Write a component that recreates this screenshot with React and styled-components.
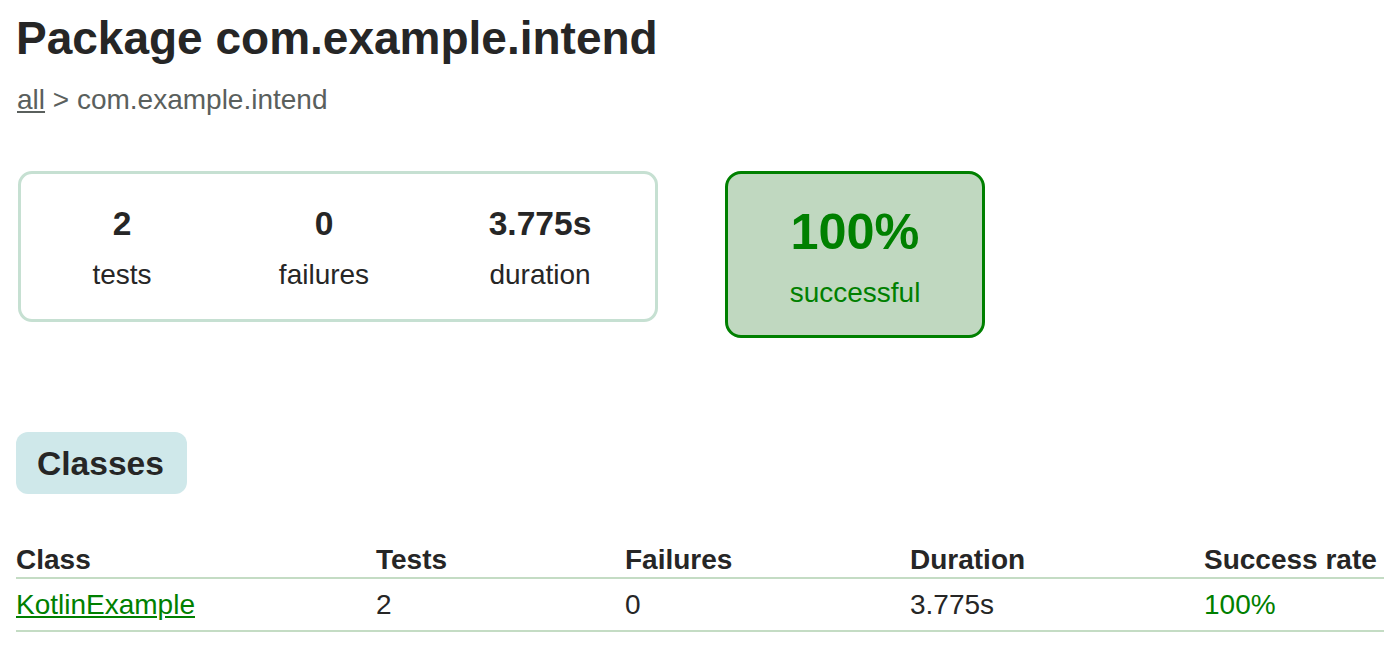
import React from 'react';
import styled, {createGlobalStyle} from 'styled-components';

const GlobalStyle = createGlobalStyle`
  html, body {
    margin: 0;
    padding: 0;
    background: #ffffff;
  }
  body {
    font-family: "Liberation Sans", Arial, Helvetica, sans-serif;
    font-size: 28px;
    color: #262626;
  }
`

const counters = [
  {value: '2', label: 'tests', width: 202},
  {value: '0', label: 'failures', width: 202},
  {value: '3.775s', label: 'duration', width: 230},
]

const columns = [
  {title: 'Class', width: 360},
  {title: 'Tests', width: 249},
  {title: 'Failures', width: 285},
  {title: 'Duration', width: 294},
  {title: 'Success rate', width: 180},
]

const rows = [
  {name: 'KotlinExample', tests: '2', failures: '0', duration: '3.775s', rate: '100%'},
]

function App() {
  return (
    <>
      <GlobalStyle />
      <Content>
        <Title>Package com.example.intend</Title>
        <Breadcrumbs>
          <CrumbLink href="#">all</CrumbLink> &gt; com.example.intend
        </Breadcrumbs>

        <Summary>
          <SummaryGroup>
            {counters.map(c => (
              <InfoBox key={c.label} $width={c.width}>
                <Counter>{c.value}</Counter>
                <Label>{c.label}</Label>
              </InfoBox>
            ))}
          </SummaryGroup>
          <SuccessRate>
            <Percent>100%</Percent>
            <Label>successful</Label>
          </SuccessRate>
        </Summary>

        <TabLinks>
          <TabLink>Classes</TabLink>
        </TabLinks>

        <Table>
          <thead>
            <tr>
              {columns.map(col => (
                <Th key={col.title} $width={col.width}>{col.title}</Th>
              ))}
            </tr>
          </thead>
          <tbody>
            {rows.map(row => (
              <tr key={row.name}>
                <Td><ClassLink href="#">{row.name}</ClassLink></Td>
                <Td>{row.tests}</Td>
                <Td>{row.failures}</Td>
                <Td>{row.duration}</Td>
                <Td $success>{row.rate}</Td>
              </tr>
            ))}
          </tbody>
        </Table>
      </Content>
    </>
  )
}

export default App;


const Content = styled.div`
  padding: 11px 16px 30px;
`

const Title = styled.h1`
  font-size: 46px;
  font-weight: bold;
  margin: 0 0 19px 0;
  white-space: nowrap;
  color: #262626;
`

const Breadcrumbs = styled.div`
  color: #5a605d;
  padding-left: 1px;
`

const CrumbLink = styled.a`
  color: #5a605d;
  text-decoration: underline;
`

const Summary = styled.div`
  display: flex;
  align-items: flex-start;
  margin-top: 55px;
  margin-left: 2px;
`

const SummaryGroup = styled.div`
  display: flex;
  border: 3px solid #c6e0d2;
  border-radius: 14px;
  width: 640px;
  box-sizing: border-box;
`

const InfoBox = styled.div`
  width: ${p => p.$width}px;
  padding: 31px 0 28px;
  text-align: center;
`

const Counter = styled.div`
  font-size: 33.6px;
  font-weight: bold;
  margin-bottom: 16px;
`

const Label = styled.div``

const SuccessRate = styled.div`
  width: 260px;
  box-sizing: border-box;
  margin-left: 67px;
  padding: 28px 0 26px;
  text-align: center;
  color: #008000;
  background: #c0d8c0;
  border: 3px solid #008000;
  border-radius: 16px;
`

const Percent = styled.div`
  font-size: 50.4px;
  font-weight: bold;
  margin-bottom: 16px;
`

const TabLinks = styled.div`
  display: flex;
  margin-top: 94px;
`

const TabLink = styled.h2`
  margin: 0;
  font-size: 33.6px;
  font-weight: bold;
  padding: 13px 23px 11px 21px;
  background: #cfe8ea;
  border-radius: 12px;
  white-space: nowrap;
`

const Table = styled.table`
  width: 100%;
  border-collapse: collapse;
  margin-top: 49px;
`

const Th = styled.th`
  width: ${p => p.$width}px;
  text-align: left;
  white-space: nowrap;
  font-weight: bold;
  padding: 1px 0;
  border-bottom: 2px solid #c4dcc4;
`

const Td = styled.td`
  white-space: nowrap;
  padding: 10px 0 9px;
  border-bottom: 2px solid #c4dcc4;
  color: ${p => (p.$success ? '#008000' : '#262626')};
`

const ClassLink = styled.a`
  color: #008000;
  text-decoration: underline;
`
